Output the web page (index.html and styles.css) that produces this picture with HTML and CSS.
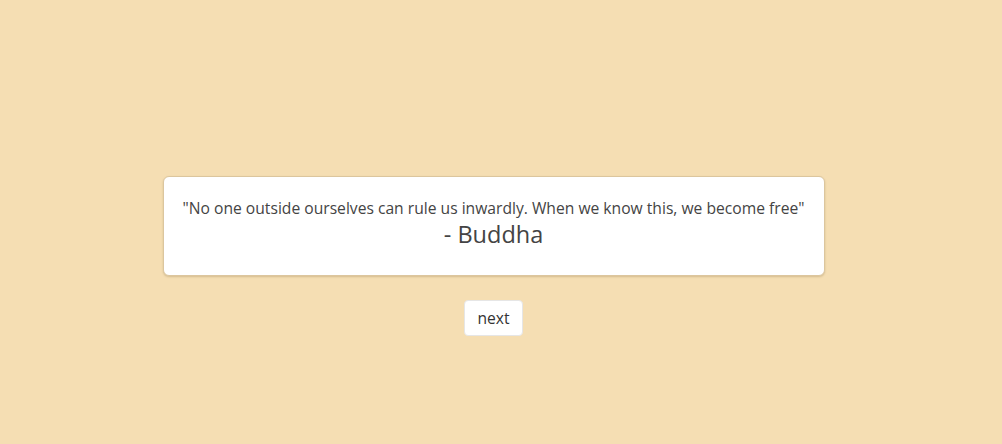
FILE: index.html
```html
<!DOCTYPE html>
<html>
<head>
<meta charset="utf-8">
<link rel="stylesheet" href="styles.css">
</head>
<body>
<main class="page">
  <section class="card">
    <p class="quote">"No one outside ourselves can rule us inwardly. When we know this, we become free"</p>
    <p class="author">- Buddha</p>
  </section>
  <button class="next">next</button>
</main>
</body>
</html>
```
FILE: styles.css
```css
html, body {
  margin: 0;
  padding: 0;
  background: #f5deb3;
}
body {
  font-family: "Open Sans", "Noto Sans", sans-serif;
  color: #444;
}
.page {
  width: 987px;
  padding-top: 176px;
  display: flex;
  flex-direction: column;
  align-items: center;
}
.card {
  box-sizing: border-box;
  width: 662px;
  height: 100px;
  background: #fff;
  border: 1px solid #dcc69e;
  border-radius: 6px;
  box-shadow: 0 1px 2px rgba(120, 90, 40, 0.25);
  padding: 19px 8px 0;
  text-align: center;
}
.quote {
  margin: 0;
  font-size: 15.65px;
  line-height: 24px;
}
.author {
  margin: 0;
  font-size: 23.5px;
  line-height: 29px;
}
.next {
  margin-top: 24px;
  box-sizing: border-box;
  width: 59px;
  height: 36px;
  background: #fff;
  border: 1px solid #e6e6e6;
  border-radius: 4px;
  font-family: inherit;
  font-size: 15.6px;
  color: #333;
  padding: 0;
}
```
